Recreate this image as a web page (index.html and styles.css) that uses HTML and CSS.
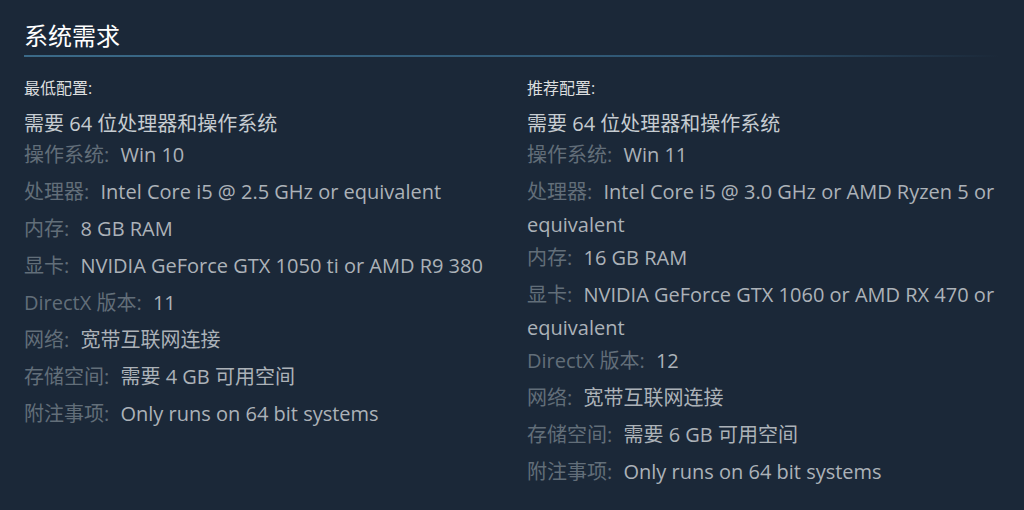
FILE: index.html
```html
<!DOCTYPE html>
<html lang="zh-CN">
<head>
    <meta charset="UTF-8">
    <meta name="viewport" content="width=device-width, initial-scale=1.0">
    <title>系统需求</title>
    <link rel="stylesheet" href="styles.css">
</head>
<body>
    <div class="sys-req">
        <h2>系统需求</h2>
        <div class="req-cols">
            <div class="req-col">
                <div class="req-title">最低配置:</div>
                <ul class="req-list">
                    <li class="req-note">需要 64 位处理器和操作系统</li>
                    <li><strong>操作系统:</strong> Win 10</li>
                    <li><strong>处理器:</strong> Intel Core i5 @ 2.5 GHz or equivalent</li>
                    <li><strong>内存:</strong> 8 GB RAM</li>
                    <li><strong>显卡:</strong> NVIDIA GeForce GTX 1050 ti or AMD R9 380</li>
                    <li><strong>DirectX 版本:</strong> 11</li>
                    <li><strong>网络:</strong> 宽带互联网连接</li>
                    <li><strong>存储空间:</strong> 需要 4 GB 可用空间</li>
                    <li><strong>附注事项:</strong> Only runs on 64 bit systems</li>
                </ul>
            </div>
            <div class="req-col">
                <div class="req-title">推荐配置:</div>
                <ul class="req-list">
                    <li class="req-note">需要 64 位处理器和操作系统</li>
                    <li><strong>操作系统:</strong> Win 11</li>
                    <li class="wrapped"><strong>处理器:</strong> Intel Core i5 @ 3.0 GHz or AMD Ryzen 5 or equivalent</li>
                    <li><strong>内存:</strong> 16 GB RAM</li>
                    <li class="wrapped"><strong>显卡:</strong> NVIDIA GeForce GTX 1060 or AMD RX 470 or equivalent</li>
                    <li><strong>DirectX 版本:</strong> 12</li>
                    <li><strong>网络:</strong> 宽带互联网连接</li>
                    <li><strong>存储空间:</strong> 需要 6 GB 可用空间</li>
                    <li><strong>附注事项:</strong> Only runs on 64 bit systems</li>
                </ul>
            </div>
        </div>
    </div>
</body>
</html>
```

FILE: styles.css
```css
body {
    margin: 0;
    background: #1b2838;
    font-family: 'Open Sans', 'Noto Sans CJK SC', sans-serif;
    color: #acb2b8;
}
.sys-req {
    padding: 0 16px 0 24px;
}
h2 {
    margin: 0 8px 0 0;
    padding: 20px 0 5px;
    font-size: 24px;
    line-height: 32px;
    font-weight: normal;
    color: #ffffff;
    background: linear-gradient(to right, #3b6a88 0%, #2f5673 70%, rgba(27, 40, 56, 0) 100%) no-repeat left bottom;
    background-size: 100% 2px;
}
.req-cols {
    display: grid;
    grid-template-columns: 479px 1fr;
    column-gap: 24px;
    padding-top: 19px;
}
.req-title {
    font-size: 16px;
    line-height: 24px;
    color: #dcdedf;
}
.req-list {
    list-style: none;
    margin: 7px 0 0;
    padding: 0;
    font-size: 20px;
    line-height: 33px;
}
.req-list li {
    margin-bottom: 4px;
}
.req-list li.req-note {
    margin-bottom: -2px;
    color: #c6ccd1;
}
.req-list li.wrapped {
    margin-bottom: 0;
}
.req-list strong {
    font-weight: normal;
    color: #626e79;
    margin-right: 6px;
}
```
